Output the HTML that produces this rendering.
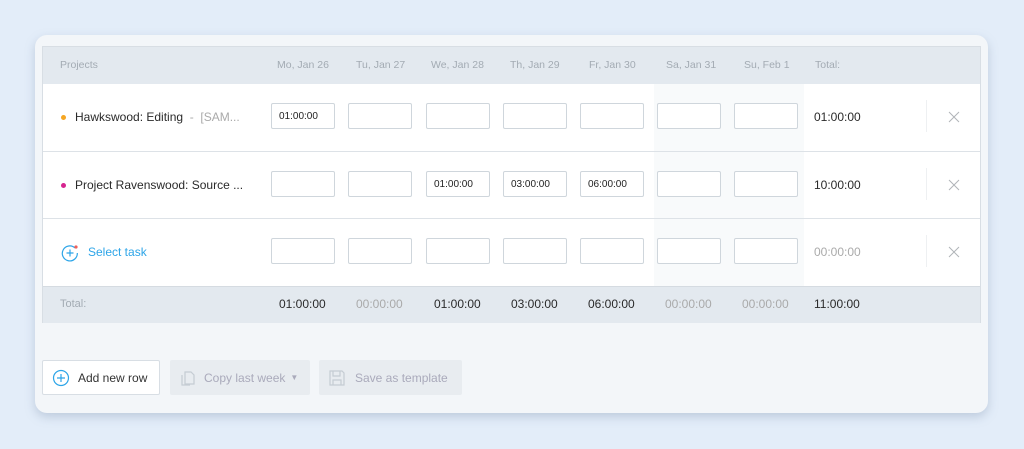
<!DOCTYPE html>
<html><head><meta charset="utf-8"><style>
*{box-sizing:border-box;margin:0;padding:0}
body{width:1024px;height:449px;background:#e3edf9;font-family:"Liberation Sans",sans-serif;position:relative;overflow:hidden}
.card{position:absolute;left:35px;top:35px;width:953px;height:378px;background:#f3f6f9;border-radius:12px;box-shadow:0 4px 10px rgba(120,140,170,.35)}
.tbl{position:absolute;left:42px;top:46px;width:939px;height:277px;border:1px solid #d8dee4;background:#fff}
.hdr{position:absolute;left:0;top:0;width:100%;height:37px;background:#e3e9ef}
.row{position:absolute;left:0;width:100%;height:68px;border-bottom:1px solid #dde2e7}
.tot{position:absolute;left:0;top:239px;width:100%;height:37px;background:#e3e9ef;border-top:1px solid #d5dbe1}
.wk{position:absolute;left:611px;top:37px;width:150px;height:202px;background:#f8fafb}
.t{position:absolute;font-size:10.5px;color:#a3abb3;white-space:nowrap}
.in{position:absolute;width:64px;height:26px;border:1px solid #cfd6dc;background:#fff;border-radius:2px;font-size:10px;color:#222;padding:7px 0 0 7px}
.v{position:absolute;font-size:12px;color:#2a2a2a;white-space:nowrap}
.g{color:#aaa}
.x{position:absolute;left:905px}
.sep{position:absolute;left:883px;width:1px;height:32px;background:#eef0f2}
.btn{position:absolute;top:360px;height:35px;border-radius:2px;font-size:12px;display:flex;align-items:center}
</style></head><body>
<div class="card"></div>
<div class="tbl">
<div class="hdr"></div>
<div class="wk"></div>
<div class="t" style="left:17px;top:12px">Projects</div>
<div class="t" style="left:234px;top:12px">Mo, Jan 26</div>
<div class="t" style="left:313px;top:12px">Tu, Jan 27</div>
<div class="t" style="left:388px;top:12px">We, Jan 28</div>
<div class="t" style="left:467px;top:12px">Th, Jan 29</div>
<div class="t" style="left:546px;top:12px">Fr, Jan 30</div>
<div class="t" style="left:623px;top:12px">Sa, Jan 31</div>
<div class="t" style="left:701px;top:12px">Su, Feb 1</div>
<div class="t" style="left:772px;top:12px">Total:</div>
<div class="row" style="top:37px"></div>
<div class="row" style="top:104px"></div>
<div class="row" style="top:171px;border:none"></div>
<div class="tot"></div>
<div style="position:absolute;left:18px;top:68px;width:5px;height:5px;border-radius:50%;background:#f5a623"></div>
<div class="v" style="left:32px;top:63px">Hawkswood: Editing <span class="g">&nbsp;-&nbsp; [SAM...</span></div>
<div style="position:absolute;left:18px;top:136px;width:5px;height:5px;border-radius:50%;background:#d6248f"></div>
<div class="v" style="left:32px;top:131px">Project Ravenswood: Source ...</div>
<svg style="position:absolute;left:17px;top:196px" width="20" height="20" viewBox="0 0 20 20"><path d="M15 5A7.5 7.5 0 1 0 17.3 10" fill="none" stroke="#2da5e8" stroke-width="1.2"/><path d="M10 6.5v7M6.5 10h7" stroke="#2da5e8" stroke-width="1.2"/><circle cx="16" cy="4" r="1.6" fill="#f0605a"/></svg>
<div class="v" style="left:45px;top:198px;color:#2da5e8">Select task</div>
<div class="in" style="left:228px;top:56px">01:00:00</div><div class="in" style="left:305px;top:56px"></div><div class="in" style="left:383px;top:56px"></div><div class="in" style="left:460px;top:56px"></div><div class="in" style="left:537px;top:56px"></div><div class="in" style="left:614px;top:56px"></div><div class="in" style="left:691px;top:56px"></div>
<div class="in" style="left:228px;top:124px"></div><div class="in" style="left:305px;top:124px"></div><div class="in" style="left:383px;top:124px">01:00:00</div><div class="in" style="left:460px;top:124px">03:00:00</div><div class="in" style="left:537px;top:124px">06:00:00</div><div class="in" style="left:614px;top:124px"></div><div class="in" style="left:691px;top:124px"></div>
<div class="in" style="left:228px;top:191px"></div><div class="in" style="left:305px;top:191px"></div><div class="in" style="left:383px;top:191px"></div><div class="in" style="left:460px;top:191px"></div><div class="in" style="left:537px;top:191px"></div><div class="in" style="left:614px;top:191px"></div><div class="in" style="left:691px;top:191px"></div>
<div class="v" style="left:771px;top:63px">01:00:00</div>
<div class="v" style="left:771px;top:131px">10:00:00</div>
<div class="v g" style="left:771px;top:198px">00:00:00</div>
<div class="sep" style="top:53px"></div><div class="sep" style="top:121px"></div><div class="sep" style="top:188px"></div>
<svg class="x" style="top:64px" width="12" height="12"><path d="M1 1L11 11M11 1L1 11" stroke="#b0b4b8" stroke-width="1"/></svg>
<svg class="x" style="top:132px" width="12" height="12"><path d="M1 1L11 11M11 1L1 11" stroke="#b0b4b8" stroke-width="1"/></svg>
<svg class="x" style="top:199px" width="12" height="12"><path d="M1 1L11 11M11 1L1 11" stroke="#b0b4b8" stroke-width="1"/></svg>
<div class="t" style="left:17px;top:251px;font-size:11px">Total:</div>
<div class="v" style="left:236px;top:250px">01:00:00</div>
<div class="v g" style="left:313px;top:250px">00:00:00</div>
<div class="v" style="left:391px;top:250px">01:00:00</div>
<div class="v" style="left:468px;top:250px">03:00:00</div>
<div class="v" style="left:545px;top:250px">06:00:00</div>
<div class="v g" style="left:622px;top:250px">00:00:00</div>
<div class="v g" style="left:699px;top:250px">00:00:00</div>
<div class="v" style="left:771px;top:250px">11:00:00</div>
</div>
<div class="btn" style="left:42px;width:118px;background:#fff;border:1px solid #d8dee4;color:#333">
<svg style="margin:0 8px 0 9px" width="18" height="18" viewBox="0 0 18 18"><circle cx="9" cy="9" r="7.5" fill="none" stroke="#2da5e8" stroke-width="1.2"/><path d="M9 5v8M5 9h8" stroke="#2da5e8" stroke-width="1.2"/></svg>Add new row</div>
<div class="btn" style="left:170px;width:140px;background:#e8ecf0;color:#aab;">
<svg style="margin:0 8px 0 10px" width="16" height="18" viewBox="0 0 16 18"><path d="M5 3h6l3 3v9H5z M2 6v10h8" fill="none" stroke="#c5ccd3" stroke-width="1.2"/></svg>Copy last week <span style="font-size:8px;margin-left:5px">▼</span></div>
<div class="btn" style="left:319px;width:143px;background:#e8ecf0;color:#aab;">
<svg style="margin:0 9px 0 9px" width="18" height="18" viewBox="0 0 18 18"><path d="M2 2h12l2 2v12H2z M5 2v5h7V2 M5 16v-5h8v5" fill="none" stroke="#c5ccd3" stroke-width="1.2"/></svg>Save as template</div>
</body></html>
